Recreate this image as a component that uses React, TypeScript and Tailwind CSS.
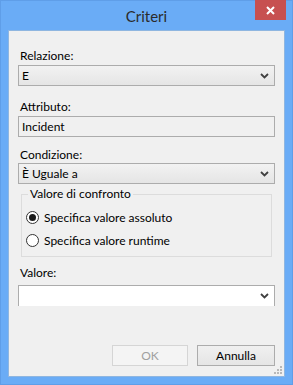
import React from 'react';

const font = { fontFamily: 'Lato, "Noto Sans", sans-serif' };

function Chevron() {
  return (
    <svg width="9" height="6" viewBox="0 0 9 6" className="shrink-0">
      <path d="M1 1 L4.5 4.5 L8 1" fill="none" stroke="#404040" strokeWidth="1.8" />
    </svg>
  );
}

function Combo({ value, white }: { value?: string; white?: boolean }) {
  return (
    <div
      className={`h-[21px] flex items-center justify-between pl-[3px] pr-[5px] border border-[#acacac] ${
        white ? 'bg-white border-b-0' : 'bg-gradient-to-b from-[#f2f2f2] to-[#e5e5e5]'
      }`}
    >
      <span className="text-[12px] text-black leading-none">{value}</span>
      <Chevron />
    </div>
  );
}

function Radio({ checked, label }: { checked?: boolean; label: string }) {
  return (
    <div className="flex items-center h-[13px] gap-[5px]">
      <div className="w-[13px] h-[13px] rounded-full border border-[#333] bg-white flex items-center justify-center">
        {checked && <div className="w-[7px] h-[7px] rounded-full bg-[#1a1a1a]" />}
      </div>
      <span className="text-[12px] text-black leading-none">{label}</span>
    </div>
  );
}

export default function App() {
  return (
    <div className="w-[293px] h-[385px] bg-[#6aacf6] border border-[#5f9ee8] flex flex-col" style={font}>
      {/* Title bar */}
      <div className="relative h-[29px] flex items-center justify-center">
        <span className="text-[15px] text-[#2b2b2b] leading-none mt-[1px]">Criteri</span>
        <button className="absolute top-[-1px] right-[6px] w-[31px] h-[20px] bg-[#c75050] flex items-center justify-center">
          <svg width="9" height="9" viewBox="0 0 9 9">
            <path d="M1 1 L8 8 M8 1 L1 8" stroke="white" strokeWidth="2" />
          </svg>
        </button>
      </div>

      {/* Client area */}
      <div className="mx-[7px] h-[347px] bg-[#f0f0f0] border border-[#8fb6e0] flex flex-col px-[9px] relative">
        <div className="mt-[16px] h-[18px] text-[12px] text-black pl-[2px]">Relazione:</div>
        <Combo value="E" />

        <div className="mt-[12px] h-[18px] text-[12px] text-black pl-[2px]">Attributo:</div>
        <div className="h-[21px] border border-[#acacac] bg-[#f0f0f0] flex items-center pl-[3px] text-[12px] text-black">
          Incident
        </div>

        <div className="mt-[9px] h-[17px] text-[12px] text-black pl-[2px]">Condizione:</div>
        <Combo value="È Uguale a" />

        {/* Group box */}
        <div className="mt-[10px] mx-[3px] h-[63px] border border-[#dcdcdc] relative flex flex-col pl-[4px] pt-[16px] gap-[10px]">
          <span className="absolute -top-[9px] left-[6px] px-[2px] bg-[#f0f0f0] text-[12px] text-black leading-[16px]">
            Valore di confronto
          </span>
          <Radio checked label="Specifica valore assoluto" />
          <Radio label="Specifica valore runtime" />
        </div>

        <div className="mt-[7px] h-[21px] text-[12px] text-black pl-[2px]">Valore:</div>
        <div className="h-[20px]">
          <Combo white />
        </div>

        <div className="flex-1" />

        <div className="flex justify-end gap-[9px] mb-[10px]">
          <button className="w-[76px] h-[21px] border border-[#d5d5d5] bg-[#f4f4f4] text-[12px] text-[#a0a0a0]">
            OK
          </button>
          <button className="w-[78px] h-[21px] border border-[#acacac] bg-gradient-to-b from-[#f0f0f0] to-[#e5e5e5] text-[12px] text-black">
            Annulla
          </button>
        </div>

        {/* resize grip */}
        <svg className="absolute right-[2px] bottom-[2px]" width="8" height="8" viewBox="0 0 8 8">
          <g fill="#b8b8b8">
            <rect x="6" y="0" width="2" height="2" />
            <rect x="3" y="3" width="2" height="2" />
            <rect x="6" y="3" width="2" height="2" />
            <rect x="0" y="6" width="2" height="2" />
            <rect x="3" y="6" width="2" height="2" />
            <rect x="6" y="6" width="2" height="2" />
          </g>
        </svg>
      </div>
    </div>
  );
}
